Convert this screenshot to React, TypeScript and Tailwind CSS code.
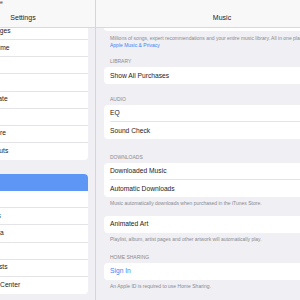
import React from "react";

const font = { fontFamily: '"Liberation Sans", Arial, sans-serif' };

function LeftRow({ label, last, selected }: { label: string; last?: boolean; selected?: boolean }) {
  return (
    <div className={`h-[17.14px] flex items-center pl-[22px] ${selected ? "bg-[#5e96f6]" : ""}`}>
      <div className={`h-full flex-1 flex items-center ${last || selected ? "" : "border-b border-[#e3e3e8]"}`}>
        <span className={`text-[6.7px] leading-none whitespace-nowrap ${selected ? "text-white" : "text-[#1c1c1e]"}`}>{label}</span>
      </div>
    </div>
  );
}

function Row({ label, last, blue }: { label: string; last?: boolean; blue?: boolean }) {
  return (
    <div className="h-[17px] flex items-center pl-[6px]">
      <div className={`h-full flex-1 flex items-center ${last ? "" : "border-b border-[#e3e3e8]"}`}>
        <span className={`text-[6.7px] leading-none whitespace-nowrap ${blue ? "text-[#3d84f5]" : "text-[#1c1c1e]"}`}>{label}</span>
      </div>
    </div>
  );
}

function Header({ children }: { children: React.ReactNode }) {
  return <div className="px-[14px] text-[5px] leading-[6px] text-[#8a8a8e] uppercase whitespace-nowrap">{children}</div>;
}

function Footer({ children }: { children: React.ReactNode }) {
  return <div className="px-[14px] text-[5px] leading-[6.7px] text-[#8a8a8e] whitespace-nowrap">{children}</div>;
}

export default function App() {
  return (
    <div className="w-[300px] h-[300px] overflow-hidden bg-[#efeff4] flex" style={font}>
      {/* Left pane */}
      <div className="w-[145px] shrink-0 ml-[-49px] h-full flex flex-col overflow-hidden border-r border-[#d6d6da] relative">
        <div className="h-[28px] shrink-0 bg-[#f8f8f8] border-b border-[#d9d9dc] relative">
          <span className="absolute left-[49px] top-[-1px] text-[5px] text-[#333]">e</span>
          <div className="absolute inset-x-0 top-[13px] text-center text-[7px] font-medium text-[#1c1c1e]">Settings</div>
        </div>
        <div className="mx-[7px] mt-[-5px] bg-white rounded-b-[4px] overflow-hidden">
          <LeftRow label="Messages" />
          <LeftRow label="FaceTime" />
          <LeftRow label="Safari" />
          <LeftRow label="News" />
          <LeftRow label="Translate" />
          <LeftRow label="Maps" />
          <LeftRow label="Measure" />
          <LeftRow label="Shortcuts" last />
        </div>
        <div className="mx-[7px] mt-[14px] bg-white rounded-[4px] overflow-hidden">
          <LeftRow label="Music" selected />
          <LeftRow label="TV" />
          <LeftRow label="Photos" />
          <LeftRow label="Camera" />
          <LeftRow label="Books" />
          <LeftRow label="Podcasts" />
          <LeftRow label="Game Center" last />
        </div>
      </div>

      {/* Right pane */}
      <div className="w-[252px] shrink-0 h-full flex flex-col">
        <div className="h-[28px] shrink-0 bg-[#f8f8f8] border-b border-[#d9d9dc] relative">
          <div className="absolute inset-x-0 top-[13px] text-center text-[7px] font-medium text-[#1c1c1e]">Music</div>
        </div>
        <div className="mx-[8px] h-[3px] bg-white rounded-b-[4px]" />
        <div className="mt-[4px]">
          <Footer>Millions of songs, expert recommendations and your entire music library. All in one place.</Footer>
          <Footer><span className="text-[#3d84f5]">Apple Music &amp; Privacy</span></Footer>
        </div>
        <div className="mt-[10px]"><Header>Library</Header></div>
        <div className="mx-[8px] mt-[3px] bg-white rounded-[4px]">
          <Row label="Show All Purchases" last />
        </div>
        <div className="mt-[12px]"><Header>Audio</Header></div>
        <div className="mx-[8px] mt-[3px] bg-white rounded-[4px]">
          <Row label="EQ" />
          <Row label="Sound Check" last />
        </div>
        <div className="mt-[15px]"><Header>Downloads</Header></div>
        <div className="mx-[8px] mt-[3px] bg-white rounded-[4px]">
          <Row label="Downloaded Music" />
          <Row label="Automatic Downloads" last />
        </div>
        <div className="mt-[3px]"><Footer>Music automatically downloads when purchased in the iTunes Store.</Footer></div>
        <div className="mx-[8px] mt-[9px] bg-white rounded-[4px]">
          <Row label="Animated Art" last />
        </div>
        <div className="mt-[3px]"><Footer>Playlist, album, artist pages and other artwork will automatically play.</Footer></div>
        <div className="mt-[11px]"><Header>Home Sharing</Header></div>
        <div className="mx-[8px] mt-[3px] bg-white rounded-[4px]">
          <Row label="Sign In" last blue />
        </div>
        <div className="mt-[3px]"><Footer>An Apple ID is required to use Home Sharing.</Footer></div>
      </div>
    </div>
  );
}
